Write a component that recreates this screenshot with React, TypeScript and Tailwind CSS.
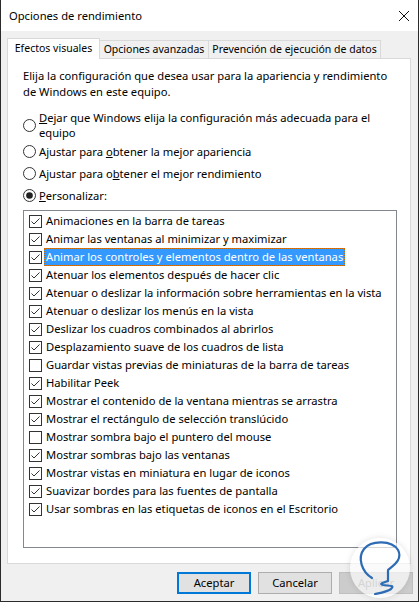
import React from "react";

type Item = { label: string; checked: boolean; selected?: boolean };

const items: Item[] = [
  { label: "Animaciones en la barra de tareas", checked: true },
  { label: "Animar las ventanas al minimizar y maximizar", checked: true },
  { label: "Animar los controles y elementos dentro de las ventanas", checked: true, selected: true },
  { label: "Atenuar los elementos después de hacer clic", checked: true },
  { label: "Atenuar o deslizar la información sobre herramientas en la vista", checked: true },
  { label: "Atenuar o deslizar los menús en la vista", checked: true },
  { label: "Deslizar los cuadros combinados al abrirlos", checked: true },
  { label: "Desplazamiento suave de los cuadros de lista", checked: true },
  { label: "Guardar vistas previas de miniaturas de la barra de tareas", checked: false },
  { label: "Habilitar Peek", checked: true },
  { label: "Mostrar el contenido de la ventana mientras se arrastra", checked: true },
  { label: "Mostrar el rectángulo de selección translúcido", checked: true },
  { label: "Mostrar sombra bajo el puntero del mouse", checked: false },
  { label: "Mostrar sombras bajo las ventanas", checked: true },
  { label: "Mostrar vistas en miniatura en lugar de iconos", checked: true },
  { label: "Suavizar bordes para las fuentes de pantalla", checked: true },
  { label: "Usar sombras en las etiquetas de iconos en el Escritorio", checked: true },
];

function Radio({ on }: { on?: boolean }) {
  return (
    <svg width="13" height="13" viewBox="0 0 13 13" className="shrink-0">
      <circle cx="6.5" cy="6.5" r="6" fill="white" stroke="#333" strokeWidth="1" />
      {on && <circle cx="6.5" cy="6.5" r="3.3" fill="#222" />}
    </svg>
  );
}

function Check({ on }: { on: boolean }) {
  return (
    <svg width="13" height="13" viewBox="0 0 13 13" className="shrink-0">
      <rect x="0.5" y="0.5" width="12" height="12" fill="white" stroke="#333" />
      {on && <path d="M2.5 6.5 L5 9 L10.5 3.5" fill="none" stroke="#333" strokeWidth="1" />}
    </svg>
  );
}

export default function App() {
  return (
    <div className="relative flex h-[602px] w-[419px] flex-col border-x border-b border-[#2b2b2b] bg-[#f0f0f0] font-['Noto_Sans',sans-serif] text-[11.2px] text-black">
      {/* title bar */}
      <div className="flex h-[31px] items-center justify-between bg-white pl-[8px] pr-[9px]">
        <span className="leading-none">Opciones de rendimiento</span>
        <svg width="10" height="10" viewBox="0 0 10 10">
          <path d="M0 0 L10 10 M10 0 L0 10" stroke="#111" strokeWidth="1" />
        </svg>
      </div>

      <div className="flex flex-1 flex-col pl-[6px] pr-[7px] pt-[7px]">
        {/* tabs */}
        <div className="relative z-10 -mb-px flex items-end whitespace-nowrap text-[10.5px]">
          <div className="flex h-[21px] w-[93px] shrink-0 items-center justify-center border border-b-0 border-[#d9d9d9] bg-white">
            Efectos visuales
          </div>
          <div className="flex h-[19px] w-[109px] shrink-0 items-center justify-center border-y border-r border-[#d9d9d9] pt-px">
            Opciones avanzadas
          </div>
          <div className="flex h-[19px] w-[172px] shrink-0 items-center justify-center border-y border-r border-[#d9d9d9] pt-px">
            Prevención de ejecución de datos
          </div>
        </div>

        {/* panel */}
        <div className="h-[506px] border border-[#d9d9d9] bg-white pl-[15px] pt-[9px]">
          <p className="whitespace-nowrap leading-[16px]">
            Elija la configuración que desea usar para la apariencia y rendimiento
            <br />
            de Windows en este equipo.
          </p>

          <div className="mt-[10px] flex items-center gap-[3px] leading-[15px]">
            <Radio />
            <span className="whitespace-nowrap">
              <u>D</u>ejar que Windows elija la configuración más adecuada para el
              <br />
              equipo
            </span>
          </div>
          <div className="mt-[4px] flex h-[15px] items-center gap-[3px] leading-[15px]">
            <Radio />
            <span>
              Ajustar para <u>o</u>btener la mejor apariencia
            </span>
          </div>
          <div className="mt-[7px] flex h-[15px] items-center gap-[3px] leading-[15px]">
            <Radio />
            <span>
              Ajustar para o<u>b</u>tener el mejor rendimiento
            </span>
          </div>
          <div className="mt-[7px] flex h-[15px] items-center gap-[3px] leading-[15px]">
            <Radio on />
            <span>
              <u>P</u>ersonalizar:
            </span>
          </div>

          {/* list */}
          <div className="mt-[7px] h-[338px] w-[374px] border border-[#828790] bg-white pt-px">
            {items.map((it) => (
              <div key={it.label} className="flex h-[18px] items-center">
                <div className="ml-[5px]">
                  <Check on={it.checked} />
                </div>
                <span
                  className={
                    it.selected
                      ? "ml-[2px] flex h-full items-center whitespace-nowrap bg-[#3399ff] px-[2px] text-white outline-1 -outline-offset-1 outline-dotted outline-[#cc6600]"
                      : "ml-[2px] flex h-full items-center whitespace-nowrap px-[2px]"
                  }
                >
                  {it.label}
                </span>
              </div>
            ))}
          </div>
        </div>

        {/* buttons */}
        <div className="-mr-[2px] mt-[8px] flex justify-end gap-[7px]">
          <button className="h-[22px] w-[74px] border-2 border-[#0078d7] bg-[#e1e1e1]">Aceptar</button>
          <button className="h-[22px] w-[74px] border border-[#adadad] bg-[#e1e1e1]">Cancelar</button>
          <button className="h-[22px] w-[74px] border border-[#bfbfbf] bg-[#cccccc] text-[#838383]">Aplicar</button>
        </div>
      </div>

      {/* watermark */}
      <div className="absolute left-[349px] top-[538px] h-[60px] w-[60px] rounded-full bg-white/65 shadow-[0_0_6px_rgba(0,0,0,0.12)]">
        <svg width="60" height="60" viewBox="0 0 60 60">
          <path
            d="M22 40 C12 34 7 20 14 11 C21 2 42 2 48 12 C53 21 44 27 38 32 L38 43 C32 45 29 46 33 47 C40 48 45 47 41 51 C37 54 30 55 25 56"
            fill="none"
            stroke="#2d6bb5"
            strokeWidth="2.2"
            strokeLinecap="round"
            strokeLinejoin="round"
          />
        </svg>
      </div>
    </div>
  );
}
